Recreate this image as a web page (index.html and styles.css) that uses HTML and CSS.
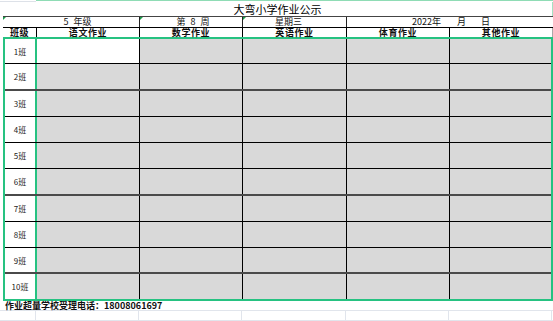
FILE: index.html
```html
<!DOCTYPE html>
<html lang="zh">
<head>
<meta charset="utf-8">
<title>大弯小学作业公示</title>
<link rel="stylesheet" href="styles.css">
</head>
<body>
<div class="sheet">
  <div class="topstrip"><div class="ts-a"></div><div class="ts-b"></div></div>
  <div class="title">大弯小学作业公示</div>
  <div class="info">
    <div class="ic grade flag">5 年级</div>
    <div class="ic week flag">第 8 周</div>
    <div class="ic day flag">星期三</div>
    <div class="ic date"><span class="yr">2022年</span><span class="mo">月</span><span class="dy">日</span></div>
  </div>
  <div class="head">
    <div class="hc">班级</div>
    <div class="hc">语文作业</div>
    <div class="hc">数学作业</div>
    <div class="hc">英语作业</div>
    <div class="hc">体育作业</div>
    <div class="hc last">其他作业</div>
  </div>
  <div class="body">
    <div class="row h25"><div class="cls">1班</div><div class="cell white"></div><div class="cell"></div><div class="cell"></div><div class="cell"></div><div class="cell end"></div></div>
    <div class="row h27 thick"><div class="cls">2班</div><div class="cell"></div><div class="cell"></div><div class="cell"></div><div class="cell"></div><div class="cell end"></div></div>
    <div class="row"><div class="cls">3班</div><div class="cell"></div><div class="cell"></div><div class="cell"></div><div class="cell"></div><div class="cell end"></div></div>
    <div class="row"><div class="cls">4班</div><div class="cell"></div><div class="cell"></div><div class="cell"></div><div class="cell"></div><div class="cell end"></div></div>
    <div class="row"><div class="cls">5班</div><div class="cell"></div><div class="cell"></div><div class="cell"></div><div class="cell"></div><div class="cell end"></div></div>
    <div class="row h27 thick"><div class="cls">6班</div><div class="cell"></div><div class="cell"></div><div class="cell"></div><div class="cell"></div><div class="cell end"></div></div>
    <div class="row"><div class="cls">7班</div><div class="cell"></div><div class="cell"></div><div class="cell"></div><div class="cell"></div><div class="cell end"></div></div>
    <div class="row"><div class="cls">8班</div><div class="cell"></div><div class="cell"></div><div class="cell"></div><div class="cell"></div><div class="cell end"></div></div>
    <div class="row thick"><div class="cls">9班</div><div class="cell"></div><div class="cell"></div><div class="cell"></div><div class="cell"></div><div class="cell end"></div></div>
    <div class="row h25 nob"><div class="cls">10班</div><div class="cell"></div><div class="cell"></div><div class="cell"></div><div class="cell"></div><div class="cell end"></div></div>
  </div>
  <div class="note">作业超量学校受理电话：18008061697</div>
  <div class="tail">
    <div class="tc"></div><div class="tc"></div><div class="tc"></div><div class="tc"></div><div class="tc"></div><div class="tc"></div><div class="tc"></div>
  </div>
</div>
</body>
</html>
```
FILE: styles.css
```css
* { box-sizing: border-box; }
html, body { margin: 0; padding: 0; background: #fff; }
body {
  width: 553px;
  height: 321px;
  overflow: hidden;
  font-family: "Noto Sans CJK SC", "Noto Sans", sans-serif;
  color: #111;
}
.sheet { width: 553px; }

.topstrip { display: flex; height: 2px; }
.ts-a { width: 36px; border-bottom: 1px solid #dde1e8; }
.ts-b { flex: 1; border-top: 1px solid #8fdcb5; }

.title {
  height: 14px;
  padding-left: 3px;
  border-right: 1px solid #a5e2c3;
  text-align: center;
  font-size: 11px;
  line-height: 14px;
  color: #000;
}

.info {
  display: grid;
  grid-template-columns: 137px 103px 104px 207px;
  margin-left: 3px;
  width: 550px;
  height: 11px;
  border-top: 1px solid #444;
}
.ic {
  position: relative;
  border-right: 1px solid #222;
  font-size: 9px;
  line-height: 10px;
  white-space: nowrap;
  word-spacing: 3px;
}
.ic.flag::before {
  content: "";
  position: absolute;
  left: 0;
  top: 0;
  border-top: 3px solid #1a9c4a;
  border-right: 3px solid transparent;
}
.grade { text-align: center; padding-left: 13px; }
.week { text-align: center; padding-left: 4px; }
.day { padding-left: 32px; }
.date { padding-left: 65px; border-right: 1px solid #bbb; }
.date .mo { margin-left: 16px; }
.date .dy { margin-left: 15px; }

.head {
  display: grid;
  grid-template-columns: 34px 103px 103px 104px 103px 103px;
  margin-left: 3px;
  width: 550px;
  height: 10px;
  border-top: 1px solid #000;
}
.hc {
  border-right: 1px solid #000;
  text-align: center;
  font-size: 9px;
  font-weight: 700;
  line-height: 9px;
  letter-spacing: 0.6px;
}
.hc.last { border-right: 1px solid #aaa; }

.body {
  margin-left: 3px;
  width: 550px;
  border: 2px solid #26c281;
}
.row {
  display: grid;
  grid-template-columns: 32px 103px 103px 104px 103px 101px;
  height: 26px;
  border-bottom: 1px solid #000;
}
.row.h25 { height: 25px; }
.row.h27 { height: 27px; }
.row.thick { border-bottom: 2px solid #4a4a4a; }
.row.nob { border-bottom: none; }
.cls {
  background: #fff;
  border-right: 2px solid #26c281;
  display: flex;
  align-items: center;
  justify-content: center;
  font-size: 8px;
  color: #222;
}
.cell {
  background: #d9d9d9;
  border-right: 1px solid #000;
}
.cell.white { background: #fff; }
.cell.end { border-right: none; }

.note {
  height: 10px;
  padding-left: 5px;
  border-bottom: 1px solid #e1e5ec;
  font-size: 9px;
  font-weight: 700;
  line-height: 9px;
  white-space: nowrap;
}
.tail {
  display: grid;
  grid-template-columns: 36px 103px 103px 104px 103px 103px 1fr;
  height: 10px;
  border-bottom: 1px solid #e1e5ec;
}
.tc { border-right: 1px solid #e1e5ec; }
.tc:last-child { border-right: none; }
```
